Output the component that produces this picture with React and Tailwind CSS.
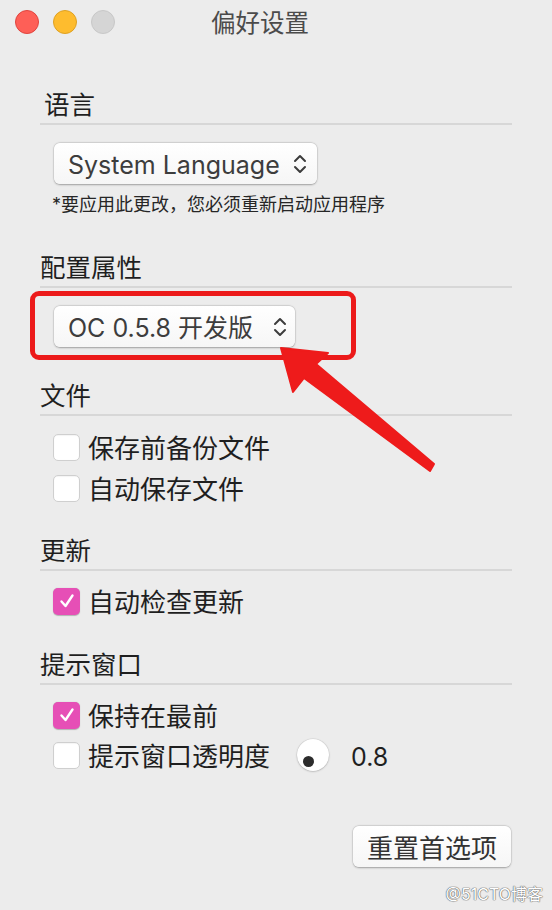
import React from 'react';

const FONT = 'font-["Inter","Noto_Sans_CJK_SC",sans-serif]';

function Chevrons() {
  return (
    <svg width="14" height="22" viewBox="0 0 14 22" fill="none" stroke="#3c3c3c" strokeWidth="2" strokeLinecap="round" strokeLinejoin="round">
      <path d="M2 8 L7 3 L12 8" />
      <path d="M2 14 L7 19 L12 14" />
    </svg>
  );
}

function Select({ label, width, pr }) {
  return (
    <div
      className={`ml-[14px] mt-[18px] flex h-[41px] items-center justify-between rounded-[6px] bg-gradient-to-b from-white to-[#f6f6f6] pl-[14px] text-[25px] text-[#3d3d3d] shadow-[0_0.5px_2px_rgba(0,0,0,0.3),0_0_0_0.5px_rgba(0,0,0,0.08)] ${width} ${pr}`}
    >
      <span className="pt-[4px] leading-[41px]">{label}</span>
      <Chevrons />
    </div>
  );
}

function Checkbox({ checked }) {
  if (checked) {
    return (
      <div className="flex h-[27px] w-[27px] shrink-0 items-center justify-center rounded-[5px] bg-[#e64fb6] shadow-[0_0.5px_1px_rgba(0,0,0,0.25)]">
        <svg width="18" height="18" viewBox="0 0 18 18" fill="none" stroke="white" strokeWidth="2.4" strokeLinecap="round" strokeLinejoin="round">
          <path d="M3.5 9.5 L7.5 14 L14.5 3.5" />
        </svg>
      </div>
    );
  }
  return (
    <div className="h-[27px] w-[27px] shrink-0 rounded-[5px] border border-[#cfcfcf] bg-white shadow-[inset_0_0.5px_1px_rgba(0,0,0,0.08)]" />
  );
}

function Heading({ children, mt, indent }) {
  return (
    <>
      <div className={`h-[34px] pt-[2px] text-[25.5px] leading-[34px] text-[#1f1f1f] ${mt} ${indent ? 'pl-[4px]' : ''}`}>{children}</div>
      <div className="mt-[3px] h-[2px] bg-[#d7d7d7]" />
    </>
  );
}

function Row({ checked, label, mt, children }) {
  return (
    <div className={`ml-[13px] flex h-[28px] items-center gap-[8px] ${mt}`}>
      <Checkbox checked={checked} />
      <span className="pt-[4px] text-[26px] leading-[28px] text-[#1f1f1f]">{label}</span>
      {children}
    </div>
  );
}

export default function App() {
  return (
    <div className={`relative h-[910px] w-[552px] overflow-hidden bg-[#ececec] ${FONT}`}>
      {/* title bar */}
      <div className="flex h-[44px] items-center pl-[15px]">
        <div className="flex gap-[14px]">
          <span className="h-[24px] w-[24px] rounded-full border border-[#e0443e] bg-[#fe5f57]" />
          <span className="h-[24px] w-[24px] rounded-full border border-[#dea123] bg-[#febc2e]" />
          <span className="h-[24px] w-[24px] rounded-full border border-[#c8c8c8] bg-[#d5d5d5]" />
        </div>
        <div className="ml-[96px] pt-[2px] text-[24.5px] text-[#4b4b4b]">偏好设置</div>
      </div>

      <div className="flex flex-col px-[40px]">
        <Heading mt="mt-[42px]" indent>
          语言
        </Heading>
        <Select label="System Language" width="w-[263px]" pr="pr-[10px]" />
        <div className="ml-[12px] mt-[6px] h-[26px] pt-[2px] text-[18px] leading-[26px] text-[#262626]">
          *要应用此更改，您必须重新启动应用程序
        </div>

        <Heading mt="mt-[33px]">配置属性</Heading>
        <Select label="OC 0.5.8 开发版" width="w-[241px]" pr="pr-[8px]" />

        <Heading mt="mt-[30px]">文件</Heading>
        <Row label="保存前备份文件" mt="mt-[17px]" />
        <Row label="自动保存文件" mt="mt-[13px]" />

        <Heading mt="mt-[30px]">更新</Heading>
        <Row checked label="自动检查更新" mt="mt-[16px]" />

        <Heading mt="mt-[31px]">提示窗口</Heading>
        <Row checked label="保持在最前" mt="mt-[16px]" />
        <Row label="提示窗口透明度" mt="mt-[12px]">
          <div className="relative ml-[19px] h-[32px] w-[32px] shrink-0 rounded-full bg-white shadow-[0_0.5px_2px_rgba(0,0,0,0.25),0_0_0_0.5px_rgba(0,0,0,0.06)]">
            <span className="absolute left-[6px] top-[17px] h-[11px] w-[11px] rounded-full bg-[#2c2c2c]" />
          </div>
          <span className="ml-[14px] pt-[4px] text-[25px] leading-[28px] text-[#1f1f1f]">0.8</span>
        </Row>

        <button
          type="button"
          className="mr-[1px] mt-[57px] flex h-[41px] w-[158px] items-center justify-center self-end rounded-[6px] bg-gradient-to-b from-white to-[#f6f6f6] pt-[3px] text-[26px] text-[#333] shadow-[0_0.5px_2px_rgba(0,0,0,0.3),0_0_0_0.5px_rgba(0,0,0,0.08)]"
        >
          重置首选项
        </button>
      </div>

      {/* annotation overlay */}
      <div className="pointer-events-none absolute left-[30px] top-[291px] h-[69px] w-[326px] rounded-[9px] border-[5px] border-[#ec1a1a]" />
      <svg className="pointer-events-none absolute left-0 top-0" width="552" height="910">
        <polygon
          points="281,348 328,353 316,364 434,464 430,471 304,378 293,392"
          fill="#ee1b1b"
          stroke="#ee1b1b"
          strokeWidth="2"
          strokeLinejoin="round"
        />
      </svg>

      <div className="absolute right-[9px] top-[884px] text-[16px] leading-[20px] text-white [text-shadow:0_0_1px_#666,0_0_1px_#666,0_0_1px_#666]">
        @51CTO博客
      </div>
    </div>
  );
}
